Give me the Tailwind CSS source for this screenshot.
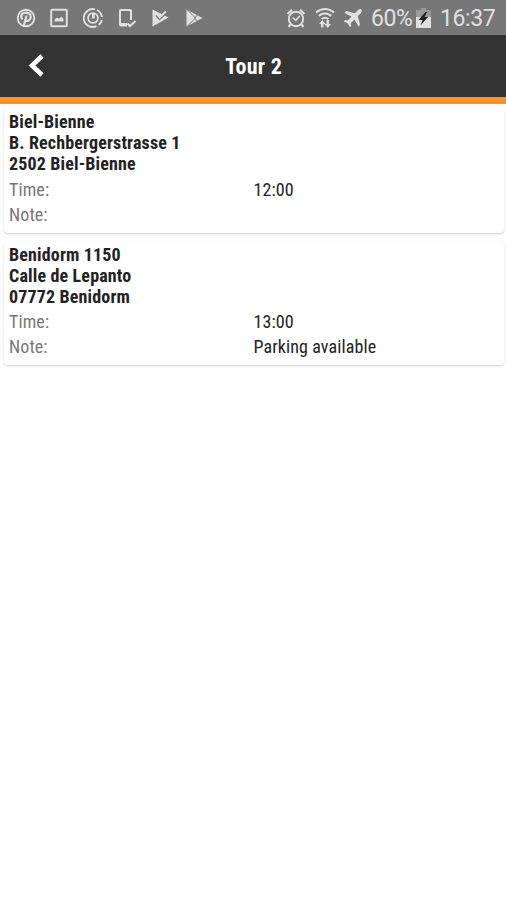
<!DOCTYPE html>
<html lang="en">
<head>
<meta charset="utf-8">
<meta name="viewport" content="width=device-width">
<title>Tour 2</title>
<script src="https://cdn.jsdelivr.net/npm/@tailwindcss/browser@4"></script>
</head>
<body class="min-h-screen bg-[#fefefe] font-['Roboto_Condensed',Roboto,sans-serif] font-stretch-condensed text-[#222]">
<div class="flex h-[35px] items-center justify-between bg-[#777] pl-[15.500px] pr-[11px] font-[Roboto,sans-serif] font-stretch-normal text-[#e0e0e0]">
  <div class="flex items-center gap-[13.700px]">
    <svg class="size-5" viewBox="0 0 20 20" fill="none"><circle cx="10" cy="10" r="8.300" stroke="#e0e0e0" stroke-width="1.900"/><path d="M6.200 11.500C3.500 7 7 4.700 10.200 4.700c4.200 0 5.400 3.500 3.900 6.300-1.200 2.200-3.500 2.300-4.500.8M10.500 7.500 8 17" stroke="#e0e0e0" stroke-width="2.200"/></svg>
    <svg class="size-5" viewBox="0 0 20 20" fill="none"><rect x="2.200" y="1.800" width="15.600" height="16.400" rx="1" stroke="#e0e0e0" stroke-width="2"/><path d="M5.500 13.500V11.500l2.500-2 2 1.200L12.500 8.500l2 2.500v2.500z" fill="#e0e0e0"/></svg>
    <svg class="size-5" viewBox="0 0 20 20" fill="none" stroke="#e0e0e0" stroke-width="1.900"><path d="M12 1.300A9 9 0 1 0 13.500 18.200M14 2A9 9 0 0 1 18.900 9M18.700 12a9 9 0 0 1-3 5"/><circle cx="10" cy="10" r="4.900"/><path d="M10.400 6v4.500" stroke-width="2.800"/></svg>
    <svg class="size-5" viewBox="0 0 20 20" fill="none" stroke="#e0e0e0" stroke-width="2"><path d="M14 12V3q0-1-1-1H4Q3 2 3 3v13.500q0 1 1 1h6"/><path d="M3 16h7"/><path d="m10.500 15.500 2.500 2.500 5.500-5"/></svg>
    <svg class="size-5" viewBox="0 0 20 20" fill="none"><path d="M2.500 1.500 18.500 9.500 2.500 18.500z" fill="#e0e0e0"/><path d="m6 7.500 3.500 4L16.500 5" stroke="#777" stroke-width="1.500"/><path d="m7 6 2.700 3.300L16 3.500" stroke="#e0e0e0" stroke-width="1.900"/></svg>
    <svg class="size-5" viewBox="0 0 20 20" fill="none"><path d="M2.500 1.500 18.500 10 2.500 18.500z" fill="#e0e0e0"/><path d="m3.500 2 8 8-8 8M14 6.500l-3.500 3.500 3.500 3.500" stroke="#777" stroke-width="1"/></svg>
  </div>
  <div class="flex items-center">
    <svg class="mr-2 size-5" viewBox="0 0 20 20" fill="none" stroke="#e0e0e0"><circle cx="10" cy="11" r="7.200" stroke-width="1.900"/><path d="M1.500 6 6 1.700M18.500 6 14 1.700M4.500 16.500l-2 2.300M15.500 16.500l2 2.300" stroke-width="2.200"/><path d="m6.500 9.500 3.300 2.800L13.700 8" stroke-width="1.600"/></svg>
    <svg class="mr-[7px] size-[22px]" viewBox="0 0 22 22" fill="none" stroke="#e0e0e0" stroke-width="2"><path d="M2 5.500q9-7 18 0M4.800 8.900q6.200-5 12.400 0M7.600 12q3.400-2.600 6.800 0"/><path d="M8.300 20.500v-5M13.700 13v6" stroke-width="2.400"/><path d="m5 17 3.300-4 3.200 4zM10.500 17l3.200 4 3.300-4z" fill="#e0e0e0" stroke="none"/></svg>
    <svg class="mr-2 size-5" viewBox="0 0 20 20" fill="#e0e0e0"><path d="M18.500 1.500q-1.700-1.200-3.700.8l-3 3L3.200 3 1.500 4.700l7 4-3.700 3.900-2.800-.5L.8 13.300l4 2.100 2.100 3.900 1.300-1.200-.5-2.900 3.800-3.700 4 7 1.700-1.700-2.400-8.600 2.900-3q2-2 .8-3.700z"/></svg>
    <span class="w-[42px] whitespace-nowrap pt-[2px] text-[23px] leading-[33px] tracking-[-0.4px]">60%</span>
    <svg class="ml-[3px] mr-[9px] h-5 w-[15px]" viewBox="0 0 15 20"><path d="M5 0h5v2h5v18H0V2h5z" fill="#999"/><path d="M0 9h15v11H0z" fill="#e0e0e0"/><path d="m9.500 4-7 8h4L4.500 17.500 12 9H8.500L11 4z" fill="#202020"/></svg>
    <span class="w-[55px] whitespace-nowrap pt-[2px] text-[23px] leading-[33px] tracking-[-0.4px]">16:37</span>
  </div>
</div>
<header class="grid h-[69px] grid-cols-[1fr_auto_1fr] items-center border-b-[7px] border-[#f7941e] bg-[#333] text-white">
  <svg class="ml-[28px] h-6 w-4" viewBox="0 0 16 24" fill="none" stroke="#fff" stroke-width="4.600"><path d="M14 2 4 11.500 14 21"/></svg>
  <h1 class="pl-[1.500px] pt-[2px] text-[22px] font-bold leading-6 tracking-[0.3px]">Tour 2</h1>
</header>
<main class="flex flex-col gap-2 pl-[3.500px] pr-[2.500px] pt-1">
  <section class="h-[125px] rounded-sm bg-white px-[5.500px] pt-[3px] text-[18px] shadow-[0_1px_2px_rgba(0,0,0,0.18)]">
    <h2 class="font-bold leading-[21.200px] tracking-[0.150px]">Biel-Bienne<br>B. Rechbergerstrasse 1<br>2502 Biel-Bienne</h2>
    <dl class="mt-[2px] grid grid-cols-[244.500px_1fr] leading-[25.300px] tracking-[0.100px]">
      <dt class="text-[#777]">Time:</dt><dd>12:00</dd>
      <dt class="text-[#777]">Note:</dt><dd></dd>
    </dl>
  </section>
  <section class="h-[124px] rounded-sm bg-white px-[5.500px] pt-[3px] text-[18px] shadow-[0_1px_2px_rgba(0,0,0,0.18)]">
    <h2 class="font-bold leading-[21.200px] tracking-[0.150px]">Benidorm 1150<br>Calle de Lepanto<br>07772 Benidorm</h2>
    <dl class="mt-[1px] grid grid-cols-[244.500px_1fr] leading-[25.500px] tracking-[0.100px]">
      <dt class="text-[#777]">Time:</dt><dd>13:00</dd>
      <dt class="text-[#777]">Note:</dt><dd>Parking available</dd>
    </dl>
  </section>
</main>
</body>
</html>
